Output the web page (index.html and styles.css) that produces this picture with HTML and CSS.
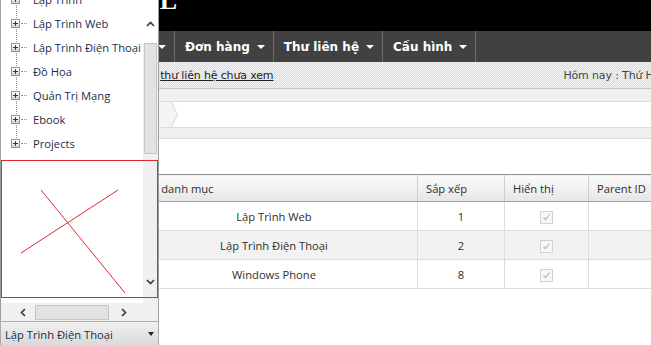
FILE: index.html
```html
<!DOCTYPE html>
<html lang="vi">
<head>
<meta charset="utf-8">
<title>Quản trị danh mục</title>
<link rel="stylesheet" href="styles.css">
</head>
<body>
<div class="page">
  <header class="top">
    <div class="logo">ADMIN PANEL</div>
  </header>
  <nav class="menu">
    <div class="menu-item lead">Sản phẩm<span class="caret"></span></div>
    <div class="menu-item">Đơn hàng<span class="caret"></span></div>
    <div class="menu-item">Thư liên hệ<span class="caret"></span></div>
    <div class="menu-item">Cấu hình<span class="caret"></span></div>
  </nav>
  <div class="infobar">
    <span class="notice">Bạn có 2 <a href="#">thư liên hệ chưa xem</a></span>
    <span class="today">Hôm nay : Thứ Hai, ngày 15/09/2014</span>
  </div>
  <div class="band"></div>
  <div class="crumbs">
    <span class="crumb"></span>
    <svg class="crumb-arrow" width="8" height="25" viewBox="0 0 8 25"><path d="M0 0h1.5L7.5 12.5 1.5 25H0z" fill="#f4f4f4"/><path d="M1.5 0 7.5 12.5 1.5 25" fill="none" stroke="#d6d6d6"/></svg>
  </div>
  <div class="band small"></div>
  <main class="content">
    <table class="grid">
      <colgroup><col class="c-id"><col class="c-name"><col class="c-sort"><col class="c-show"><col class="c-parent"><col class="c-act"></colgroup>
      <thead>
        <tr><th>STT</th><th>Tên danh mục</th><th>Sắp xếp</th><th>Hiển thị</th><th>Parent ID</th><th>Thao tác</th></tr>
      </thead>
      <tbody>
        <tr><td>1</td><td>Lập Trình Web</td><td>1</td><td><span class="chk"><svg width="11" height="11" viewBox="0 0 11 11"><path d="M2.5 5.5 4.5 7.5 8.5 2.5" fill="none" stroke="#b9b9b9" stroke-width="1.2"/></svg></span></td><td></td><td></td></tr>
        <tr class="alt"><td>2</td><td>Lập Trình Điện Thoại</td><td>2</td><td><span class="chk"><svg width="11" height="11" viewBox="0 0 11 11"><path d="M2.5 5.5 4.5 7.5 8.5 2.5" fill="none" stroke="#b9b9b9" stroke-width="1.2"/></svg></span></td><td></td><td></td></tr>
        <tr><td>3</td><td>Windows Phone</td><td>8</td><td><span class="chk"><svg width="11" height="11" viewBox="0 0 11 11"><path d="M2.5 5.5 4.5 7.5 8.5 2.5" fill="none" stroke="#b9b9b9" stroke-width="1.2"/></svg></span></td><td></td><td></td></tr>
      </tbody>
    </table>
  </main>
</div>

<div class="picker">
  <div class="pop">
    <ul class="tree">
      <li><span class="pm"><svg width="7" height="7" viewBox="0 0 7 7"><path d="M1 3.5h5M3.5 1v5" stroke="#3a3a3a"/></svg></span><span class="dots"></span><span>Lập Trình</span></li>
      <li><span class="pm"><svg width="7" height="7" viewBox="0 0 7 7"><path d="M1 3.5h5M3.5 1v5" stroke="#3a3a3a"/></svg></span><span class="dots"></span><span>Lập Trình Web</span></li>
      <li><span class="pm"><svg width="7" height="7" viewBox="0 0 7 7"><path d="M1 3.5h5M3.5 1v5" stroke="#3a3a3a"/></svg></span><span class="dots"></span><span>Lập Trình Điện Thoại</span></li>
      <li><span class="pm"><svg width="7" height="7" viewBox="0 0 7 7"><path d="M1 3.5h5M3.5 1v5" stroke="#3a3a3a"/></svg></span><span class="dots"></span><span>Đồ Họa</span></li>
      <li><span class="pm"><svg width="7" height="7" viewBox="0 0 7 7"><path d="M1 3.5h5M3.5 1v5" stroke="#3a3a3a"/></svg></span><span class="dots"></span><span>Quản Trị Mạng</span></li>
      <li><span class="pm"><svg width="7" height="7" viewBox="0 0 7 7"><path d="M1 3.5h5M3.5 1v5" stroke="#3a3a3a"/></svg></span><span class="dots"></span><span>Ebook</span></li>
      <li class="last"><span class="pm"><svg width="7" height="7" viewBox="0 0 7 7"><path d="M1 3.5h5M3.5 1v5" stroke="#3a3a3a"/></svg></span><span class="dots"></span><span>Projects</span></li>
    </ul>
    <div class="vscroll">
      <span class="sb-up"><svg width="9" height="6" viewBox="0 0 9 6"><path d="M1 5 4.5 1.5 8 5" fill="none" stroke="#3c3c3c" stroke-width="1.7"/></svg></span>
      <span class="vthumb"></span>
      <span class="sb-down"><svg width="9" height="6" viewBox="0 0 9 6"><path d="M1 1 4.5 4.5 8 1" fill="none" stroke="#3c3c3c" stroke-width="1.7"/></svg></span>
    </div>
    <div class="hscroll">
      <svg width="6" height="9" viewBox="0 0 6 9"><path d="M5 1 1.5 4.5 5 8" fill="none" stroke="#3c3c3c" stroke-width="1.7"/></svg>
      <span class="hthumb"></span>
      <svg width="6" height="9" viewBox="0 0 6 9"><path d="M1 1 4.5 4.5 1 8" fill="none" stroke="#3c3c3c" stroke-width="1.7"/></svg>
    </div>
    <div class="corner"></div>
    <svg class="sketch" width="157" height="138" viewBox="0 0 157 138">
      <rect x="0.5" y="0.5" width="156" height="137" fill="none" stroke="#e3262d"/>
      <path d="M40 30 124 133M20 93 117 30" stroke="#e3262d" fill="none"/>
    </svg>
  </div>
  <div class="select">
    <span>Lập Trình Điện Thoại</span>
    <span class="select-caret"></span>
  </div>
</div>
</body>
</html>
```
FILE: styles.css
```css
* { box-sizing: border-box; margin: 0; padding: 0; }
html, body { overflow: hidden; }
body { width: 651px; height: 345px; background: #fff; font-family: "Open Sans", "Noto Sans", sans-serif; }

.page { width: 1000px; }

.top { height: 31px; background: #000; overflow: hidden; }
.logo {
  width: 177px; margin-top: -12px; display: flex; justify-content: flex-end; white-space: nowrap;
  font: bold 26px/26px "Liberation Serif", serif; color: #fff;
}

.menu {
  height: 31px; display: flex; background: #414141;
  font: bold 12px "DejaVu Sans", sans-serif; color: #fff;
}
.menu-item {
  display: flex; align-items: center; gap: 7px;
  padding: 0 8px 0 10px; border-right: 1px solid #6c6c6c;
}
.menu-item.lead { width: 175px; justify-content: flex-end; }
.caret {
  width: 0; height: 0;
  border-left: 4px solid transparent; border-right: 4px solid transparent;
  border-top: 4px solid #fff;
}

.infobar {
  height: 27px; display: flex; align-items: center; padding-left: 110px;
  white-space: nowrap; font: 11px "DejaVu Sans", sans-serif; letter-spacing: -0.15px; color: #333;
  background: #e9e9e9 repeating-conic-gradient(#dedede 0 25%, #f1f1f1 0 50%) 0 0 / 2px 2px;
  border-bottom: 1px solid #c4c4c4; box-shadow: 0 1px 0 #e2e2e2;
}
.infobar a { color: #222; }
.today { margin-left: 290px; color: #444; }

.band { height: 13px; background: #f0f0f0; border-bottom: 1px solid #dcdcdc; }
.band.small { height: 11px; }
.crumbs { height: 26px; display: flex; border-bottom: 1px solid #dcdcdc; }
.crumb { width: 170px; background: #f4f4f4; }

.content { padding-top: 35px; }
.grid {
  border-collapse: collapse; table-layout: fixed; width: 788px;
  font-size: 11.2px; color: #2e2e2e;
}
.c-id { width: 130px; }
.c-name { width: 287px; }
.c-sort { width: 87px; }
.c-show { width: 84px; }
.c-parent { width: 100px; }
.c-act { width: 100px; }
.grid th {
  height: 27px; padding: 0 8px; text-align: left; font-weight: normal;
  background: linear-gradient(#fbfbfb, #e6e6e6);
  border-top: 1px solid #8f8f8f; border-bottom: 1px solid #a3a3a3; border-left: 1px solid #cfcfcf;
}
.grid td {
  height: 29px; text-align: center;
  border-bottom: 1px solid #dcdcdc; border-left: 1px solid #dcdcdc;
}
.grid tr.alt td { background: #f2f2f2; }
.chk {
  display: inline-block; width: 13px; height: 13px; vertical-align: middle;
  border: 1px solid #d2d2d2; background: #f7f7f7;
}
.chk svg { display: block; }

.picker { position: absolute; left: 0; top: 0; width: 159px; font-size: 11.2px; color: #1a2e4c; }
.pop {
  position: relative; height: 321px; background: #fff;
  display: grid; grid-template-columns: 142px 15px; grid-template-rows: 303px 18px;
  border-left: 1px solid #a0a0a0; border-right: 1px solid #a0a0a0;
}
.tree { list-style: none; margin-top: -13px; overflow: hidden; }
.tree li {
  height: 24px; display: flex; align-items: center; padding-left: 10px; white-space: nowrap;
  background: repeating-linear-gradient(#8c8c8c 0 1px, transparent 1px 2px) 15px 0 / 1px 100% no-repeat;
}
.tree li.last { background-size: 1px 50%; }
.pm {
  width: 9px; height: 9px; border: 1px solid #939393;
  background: linear-gradient(#fff, #d4d4d4);
}
.pm svg { display: block; }
.dots { width: 6px; margin: 0 6px 0 1px; border-top: 1px dotted #8c8c8c; }

.vscroll { background: #f0f0f0; display: flex; flex-direction: column; align-items: center; }
.sb-up { height: 43px; width: 100%; display: flex; justify-content: center; padding-top: 21px; background: #fff; }
.vthumb { width: 13px; height: 111px; background: #e2e2e2; border: 1px solid #c6c6c6; }
.sb-down { margin-top: auto; padding-bottom: 18px; }
.sb-up svg, .sb-down svg { display: block; }

.hscroll { background: #f0f0f0; display: flex; align-items: center; padding-left: 19px; }
.hthumb { width: 74px; height: 15px; margin: 0 12px 0 9px; background: #e2e2e2; border: 1px solid #c6c6c6; }
.corner { background: #f0f0f0; }
.sketch { position: absolute; left: 0; top: 160px; }

.select {
  height: 26px; display: flex; align-items: center; justify-content: space-between;
  padding: 0 4px 0 4px; border: 1px solid #ababab;
  background: linear-gradient(#f0f0f0, #d9d9d9);
}
.select-caret {
  width: 0; height: 0;
  border-left: 3.5px solid transparent; border-right: 3.5px solid transparent;
  border-top: 4px solid #222;
}
```
